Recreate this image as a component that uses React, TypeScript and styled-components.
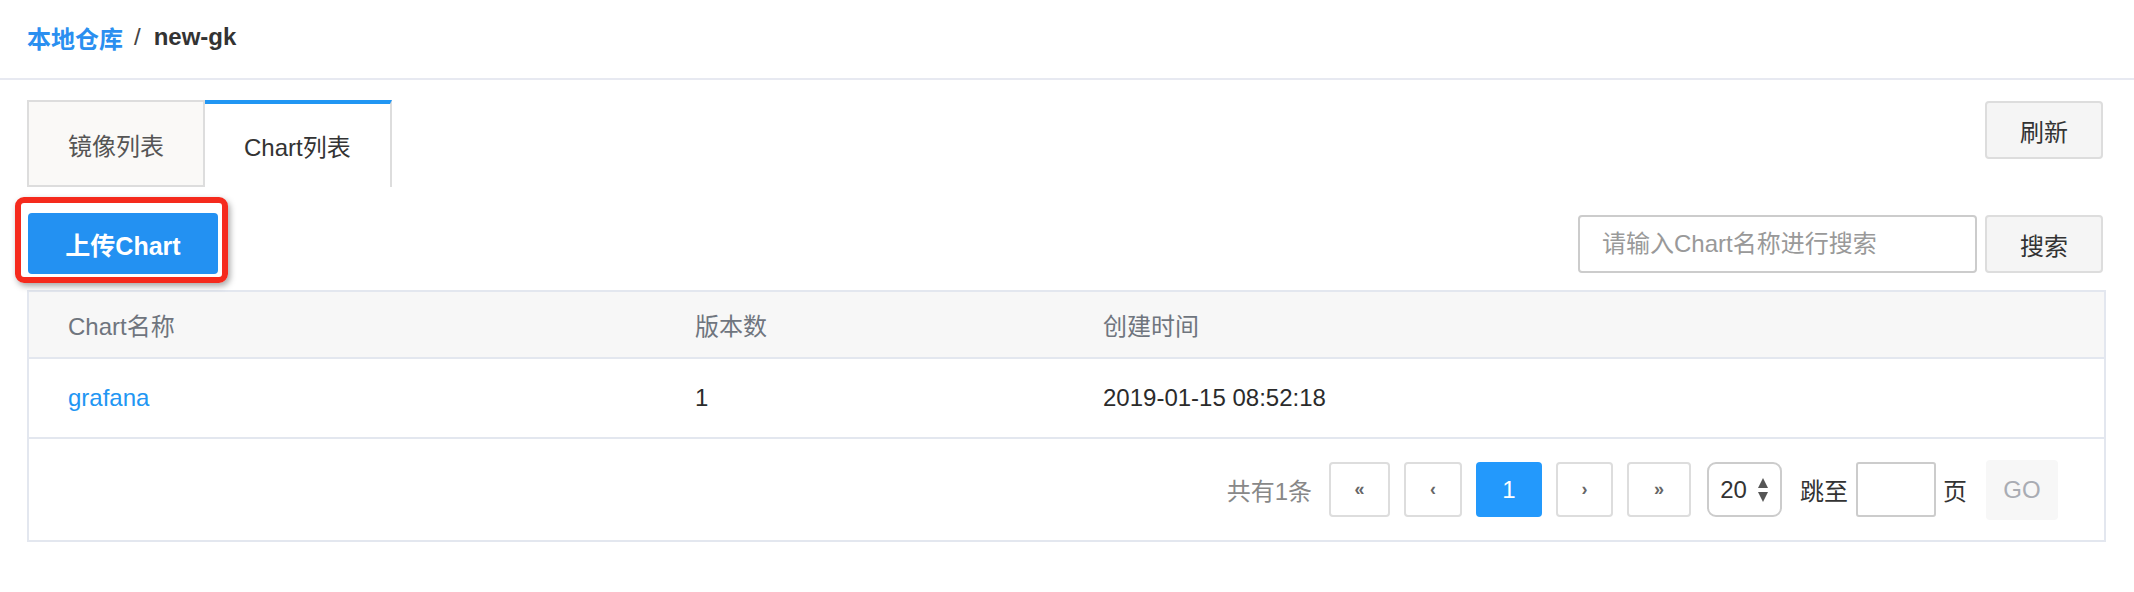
import styled, { createGlobalStyle } from 'styled-components'

const GlobalStyle = createGlobalStyle`
    html, body {
        margin: 0;
        padding: 0;
        background: #ffffff;
        font-family: "Liberation Sans", Arial, "Noto Sans CJK SC", sans-serif;
    }
`

type Chart = { name: string; versions: number; created: string }

const charts: Chart[] = [
    { name: 'grafana', versions: 1, created: '2019-01-15 08:52:18' },
]

function App() {
    return (
        <Page>
            <GlobalStyle />
            <Crumbs>
                <CrumbLink>本地仓库</CrumbLink>
                <CrumbSep>/</CrumbSep>
                <CrumbCurrent>new-gk</CrumbCurrent>
            </Crumbs>
            <Content>
                <TabRow>
                    <Tabs>
                        <Tab>镜像列表</Tab>
                        <Tab $active>Chart列表</Tab>
                    </Tabs>
                    <GrayButton style={{ marginTop: 1 }}>刷新</GrayButton>
                </TabRow>
                <Toolbar>
                    <Highlight>
                        <PrimaryButton>上传Chart</PrimaryButton>
                    </Highlight>
                    <SearchGroup>
                        <SearchInput placeholder="请输入Chart名称进行搜索" />
                        <GrayButton>搜索</GrayButton>
                    </SearchGroup>
                </Toolbar>
                <Card>
                    <Table>
                        <colgroup>
                            <col style={{ width: 627 }} />
                            <col style={{ width: 408 }} />
                            <col />
                        </colgroup>
                        <thead>
                            <tr>
                                <Th>Chart名称</Th>
                                <Th>版本数</Th>
                                <Th>创建时间</Th>
                            </tr>
                        </thead>
                        <tbody>
                            {charts.map((c) => (
                                <tr key={c.name}>
                                    <Td><NameLink>{c.name}</NameLink></Td>
                                    <Td>{c.versions}</Td>
                                    <Td>{c.created}</Td>
                                </tr>
                            ))}
                        </tbody>
                    </Table>
                    <Footer>
                        <Total>共有1条</Total>
                        <PageBtn $w={61}>«</PageBtn>
                        <PageBtn $w={58}>‹</PageBtn>
                        <PageBtn $w={66} $active>1</PageBtn>
                        <PageBtn $w={57}>›</PageBtn>
                        <PageBtn $w={64}>»</PageBtn>
                        <SizeSelect>
                            <span>20</span>
                            <svg width="12" height="26" viewBox="0 0 12 26">
                                <polygon points="6,1 11,11 1,11" fill="#555" />
                                <polygon points="1,15 11,15 6,25" fill="#555" />
                            </svg>
                        </SizeSelect>
                        <JumpText style={{ marginLeft: 4 }}>跳至</JumpText>
                        <JumpInput />
                        <JumpText>页</JumpText>
                        <GoButton>GO</GoButton>
                    </Footer>
                </Card>
            </Content>
        </Page>
    )
}

const Page = styled.div`
    width: 2134px;
    min-height: 592px;
    background: #ffffff;
`
const Crumbs = styled.div`
    display: flex;
    align-items: center;
    height: 74px;
    padding: 0 0 4px 27px;
    border-bottom: 2px solid #e7e9f1;
    font-size: 24px;
    font-weight: bold;
`
const CrumbLink = styled.span`
    color: #2a8ff0;
`
const CrumbSep = styled.span`
    color: #444;
    font-weight: normal;
    margin: 0 13px 0 11px;
`
const CrumbCurrent = styled.span`
    color: #333;
`
const Content = styled.div`
    padding: 20px 28px 0 27px;
`
const TabRow = styled.div`
    display: flex;
    justify-content: space-between;
    align-items: flex-start;
    padding-right: 3px;
`
const Tabs = styled.div`
    display: flex;
`
const Tab = styled.div<{ $active?: boolean }>`
    box-sizing: border-box;
    height: 87px;
    padding: 0 39px;
    display: flex;
    align-items: center;
    font-size: 24px;
    color: ${(p) => (p.$active ? '#333' : '#555')};
    background: ${(p) => (p.$active ? '#ffffff' : '#faf9f7')};
    border: 2px solid #dddddd;
    border-top: ${(p) => (p.$active ? '4px solid #2196f3' : '2px solid #dddddd')};
    border-left: ${(p) => (p.$active ? 'none' : '2px solid #dddddd')};
    border-bottom: ${(p) => (p.$active ? 'none' : '2px solid #dddddd')};
    padding-top: ${(p) => (p.$active ? '0' : '2px')};
`
const GrayButton = styled.button`
    box-sizing: border-box;
    width: 118px;
    height: 58px;
    border: 2px solid #dddddd;
    border-radius: 4px;
    background: #f5f5f5;
    color: #333;
    font-family: inherit;
    font-size: 24px;
    padding: 0;
`
const Toolbar = styled.div`
    display: flex;
    justify-content: space-between;
    align-items: flex-start;
    margin-top: 10px;
    padding-right: 3px;
`
const Highlight = styled.div`
    margin-left: -12px;
    padding: 10px 4px 3px 7px;
    border: 6px solid #f52a1d;
    border-radius: 9px;
    box-shadow: 2px 3px 6px rgba(0, 0, 0, 0.35);
`
const PrimaryButton = styled.button`
    display: block;
    width: 190px;
    height: 61px;
    border: none;
    border-radius: 4px;
    background: #2391f2;
    color: #ffffff;
    font-family: inherit;
    font-size: 25px;
    font-weight: bold;
    padding: 0;
`
const SearchGroup = styled.div`
    display: flex;
    gap: 8px;
    margin-top: 18px;
`
const SearchInput = styled.input`
    box-sizing: border-box;
    width: 399px;
    height: 58px;
    border: 2px solid #cccccc;
    border-radius: 4px;
    padding: 0 22px;
    font-family: inherit;
    font-size: 24px;
    outline: none;
    &::placeholder {
        color: #999;
    }
`
const Card = styled.div`
    margin-top: 7px;
    border: 2px solid #e3e7ef;
`
const Table = styled.table`
    width: 100%;
    border-collapse: collapse;
    table-layout: fixed;
`
const Th = styled.th`
    height: 65px;
    padding: 0 0 0 39px;
    background: #f7f7f7;
    border-bottom: 2px solid #e3e7ef;
    text-align: left;
    font-weight: normal;
    font-size: 24px;
    color: #6f757e;
`
const Td = styled.td`
    height: 78px;
    padding: 0 0 0 39px;
    border-bottom: 2px solid #e3e7ef;
    font-size: 24px;
    color: #2b2b2b;
`
const NameLink = styled.a`
    color: #2196f3;
    text-decoration: none;
`
const Footer = styled.div`
    display: flex;
    justify-content: flex-end;
    align-items: center;
    height: 101px;
    padding-right: 46px;
    gap: 14px;
`
const Total = styled.span`
    font-size: 24px;
    color: #888;
    margin-right: 3px;
`
const PageBtn = styled.div<{ $w: number; $active?: boolean }>`
    box-sizing: border-box;
    width: ${(p) => p.$w}px;
    height: 55px;
    display: flex;
    align-items: center;
    justify-content: center;
    border-radius: 4px;
    border: ${(p) => (p.$active ? 'none' : '2px solid #dddddd')};
    background: ${(p) => (p.$active ? '#2399fc' : '#ffffff')};
    color: ${(p) => (p.$active ? '#ffffff' : '#666')};
    font-size: ${(p) => (p.$active ? '24px' : '18px')};
    font-weight: ${(p) => (p.$active ? 'normal' : 'bold')};
`
const SizeSelect = styled.div`
    box-sizing: border-box;
    width: 75px;
    height: 55px;
    margin-left: 2px;
    display: flex;
    align-items: center;
    justify-content: center;
    gap: 10px;
    border: 2px solid #cccccc;
    border-radius: 9px;
    font-size: 24px;
    color: #333;
`
const JumpText = styled.span`
    font-size: 24px;
    color: #333;
    margin-right: -6px;
`
const JumpInput = styled.div`
    box-sizing: border-box;
    width: 80px;
    height: 55px;
    border: 2px solid #cccccc;
    border-radius: 3px;
    margin-right: -7px;
`
const GoButton = styled.div`
    width: 72px;
    height: 60px;
    margin-left: 11px;
    display: flex;
    align-items: center;
    justify-content: center;
    background: #f7f7f7;
    border-radius: 4px;
    font-size: 24px;
    color: #a9acb3;
`

export default App
